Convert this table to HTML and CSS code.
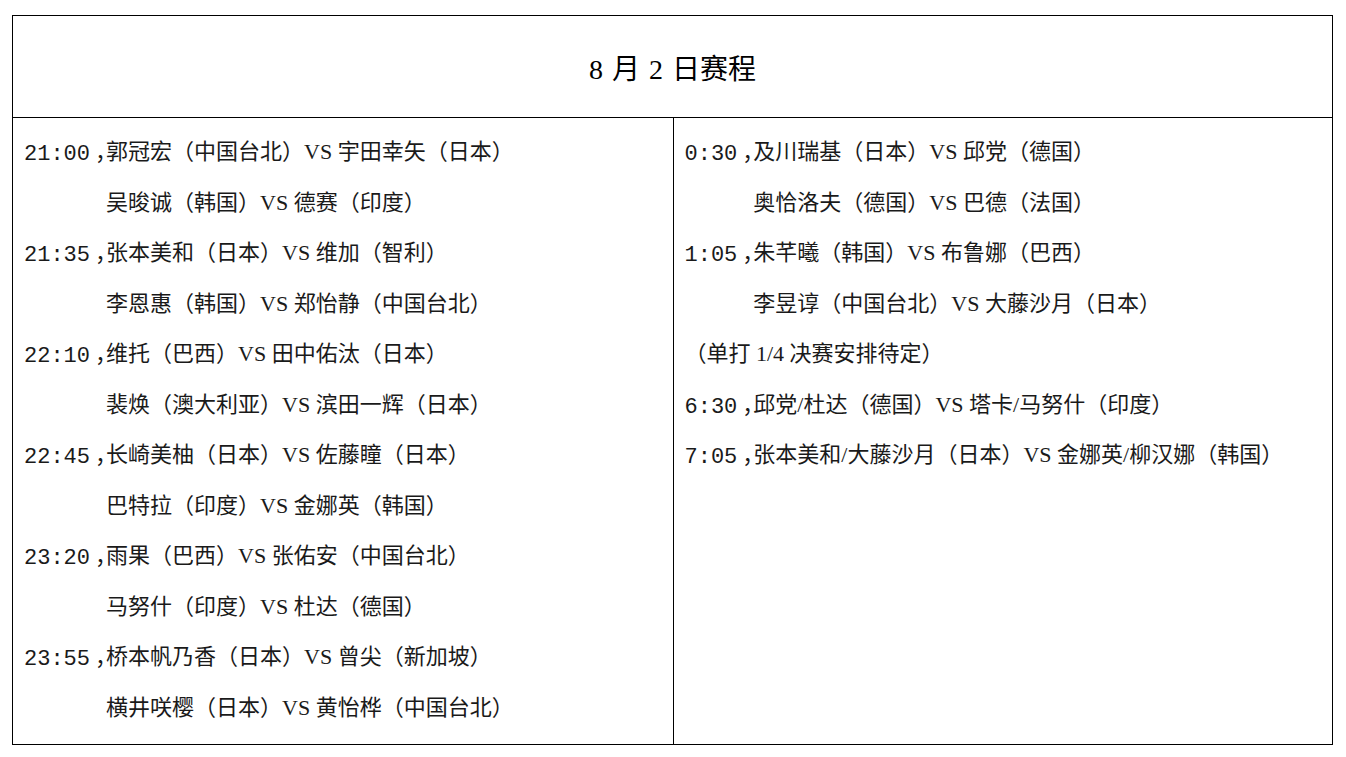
FILE: index.html
```html
<!DOCTYPE html>
<html lang="zh-CN">
<head>
<meta charset="utf-8">
<title>8月2日赛程</title>
<link rel="stylesheet" href="styles.css">
</head>
<body>
<div class="sheet">
  <div class="title">8 月 2 日赛程</div>
  <div class="cols">
    <div class="col">
      <div class="entry"><span class="time">21:00<span class="cm">，</span></span><span class="line">郭冠宏（中国台北）VS 宇田幸矢（日本）</span><span class="line cont">吴晙诚（韩国）VS 德赛（印度）</span></div>
      <div class="entry"><span class="time">21:35<span class="cm">，</span></span><span class="line">张本美和（日本）VS 维加（智利）</span><span class="line cont">李恩惠（韩国）VS 郑怡静（中国台北）</span></div>
      <div class="entry"><span class="time">22:10<span class="cm">，</span></span><span class="line">维托（巴西）VS 田中佑汰（日本）</span><span class="line cont">裴焕（澳大利亚）VS 滨田一辉（日本）</span></div>
      <div class="entry"><span class="time">22:45<span class="cm">，</span></span><span class="line">长崎美柚（日本）VS 佐藤瞳（日本）</span><span class="line cont">巴特拉（印度）VS 金娜英（韩国）</span></div>
      <div class="entry"><span class="time">23:20<span class="cm">，</span></span><span class="line">雨果（巴西）VS 张佑安（中国台北）</span><span class="line cont">马努什（印度）VS 杜达（德国）</span></div>
      <div class="entry"><span class="time">23:55<span class="cm">，</span></span><span class="line">桥本帆乃香（日本）VS 曾尖（新加坡）</span><span class="line cont">横井咲樱（日本）VS 黄怡桦（中国台北）</span></div>
    </div>
    <div class="col right">
      <div class="entry"><span class="time">0:30<span class="cm">，</span></span><span class="line">及川瑞基（日本）VS 邱党（德国）</span><span class="line cont">奥恰洛夫（德国）VS 巴德（法国）</span></div>
      <div class="entry"><span class="time">1:05<span class="cm">，</span></span><span class="line">朱芊曦（韩国）VS 布鲁娜（巴西）</span><span class="line cont">李昱谆（中国台北）VS 大藤沙月（日本）</span></div>
      <div class="note">（单打 1/4 决赛安排待定）</div>
      <div class="entry"><span class="time">6:30<span class="cm">，</span></span><span class="line">邱党/杜达（德国）VS 塔卡/马努什（印度）</span></div>
      <div class="entry"><span class="time">7:05<span class="cm">，</span></span><span class="line">张本美和/大藤沙月（日本）VS 金娜英/柳汉娜（韩国）</span></div>
    </div>
  </div>
</div>
</body>
</html>
```
FILE: styles.css
```css
html, body {
  margin: 0;
  padding: 0;
  background: #fff;
}
body {
  font-family: "Liberation Serif", "Noto Sans CJK SC", serif;
  color: #1a1a1a;
}
.sheet {
  box-sizing: border-box;
  width: 1321px;
  margin: 15px 0 0 12px;
  border: 1px solid #000;
}
.title {
  height: 101px;
  display: flex;
  align-items: center;
  justify-content: center;
  font-size: 28px;
  word-spacing: 2px;
  color: #000;
  border-bottom: 1px solid #000;
}
.cols {
  display: grid;
  grid-template-columns: 1fr 1fr;
  height: 626px;
}
.col {
  box-sizing: border-box;
  padding: 9px 11px 11px;
  font-size: 22px;
  line-height: 50.5px;
}
.col.right {
  border-left: 1px solid #000;
}
.entry {
  display: grid;
  grid-template-columns: auto 1fr;
  grid-auto-rows: 50.5px;
  align-items: start;
  white-space: nowrap;
}
.line {
  grid-column: 2;
}
.time {
  grid-column: 1;
  grid-row: 1;
  font-family: "Liberation Mono", monospace;
  line-height: 46px;
}
.cm {
  font-family: "Noto Sans CJK SC", sans-serif;
  padding-left: 5px;
  letter-spacing: -11px;
}
.note {
  white-space: nowrap;
  height: 50.5px;
}
```
